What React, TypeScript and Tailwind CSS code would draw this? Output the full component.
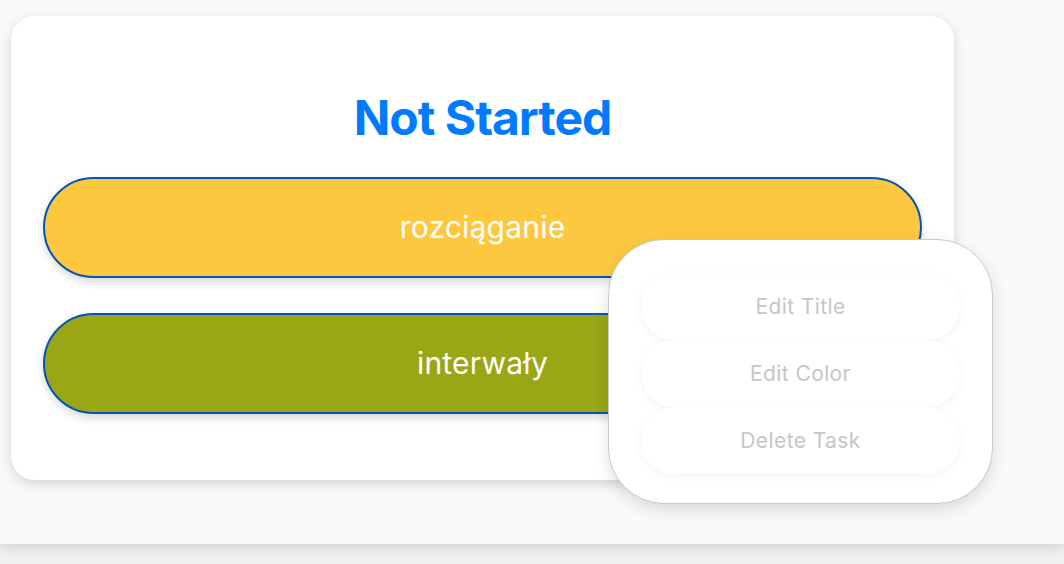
const tasks = [
  { title: "rozciąganie", color: "bg-[#fdc840]" },
  { title: "interwały", color: "bg-[#9aa615]" },
];

const menuItems = ["Edit Title", "Edit Color", "Delete Task"];

function TaskMenu() {
  return (
    <div className="absolute left-[597px] top-[223px] w-[385px] h-[265px] rounded-[56px] border border-[#c9c9c9] bg-white px-[32px] pt-[33px] shadow-[0_6px_16px_rgba(0,0,0,0.12)] z-10">
      {menuItems.map((item) => (
        <button
          key={item}
          className="flex h-[67px] w-full items-center justify-center rounded-full bg-white text-[21px] tracking-[0.4px] text-[#c6c6c6] shadow-[0_2px_10px_rgba(0,0,0,0.05)]"
        >
          {item}
        </button>
      ))}
    </div>
  );
}

function App() {
  return (
    <div className="min-h-screen bg-[#f0f0f0] font-['Inter','Noto_Sans',sans-serif]">
      <div className="h-[544px] bg-[#f8f9fa] pl-[11px] pt-[16px] shadow-[0_4px_10px_rgba(0,0,0,0.12)]">
        <div className="relative w-[943px] h-[464px] rounded-[24px] bg-white px-[32px] pt-[78px] shadow-[0_4px_12px_rgba(0,0,0,0.15)]">
          <h2 className="text-center text-[48px] leading-[48px] font-bold tracking-[-1px] text-[#007bff]">
            Not Started
          </h2>
          <div className="mt-[35px] flex flex-col gap-[35px]">
            {tasks.map((task) => (
              <div
                key={task.title}
                className={`flex h-[101px] items-center justify-center rounded-full border-2 border-[#0056b3] ${task.color} text-[30px] tracking-[0.2px] text-white shadow-[0_4px_8px_rgba(0,0,0,0.15)]`}
              >
                {task.title}
              </div>
            ))}
          </div>
          <TaskMenu />
        </div>
      </div>
    </div>
  );
}

export default App;
